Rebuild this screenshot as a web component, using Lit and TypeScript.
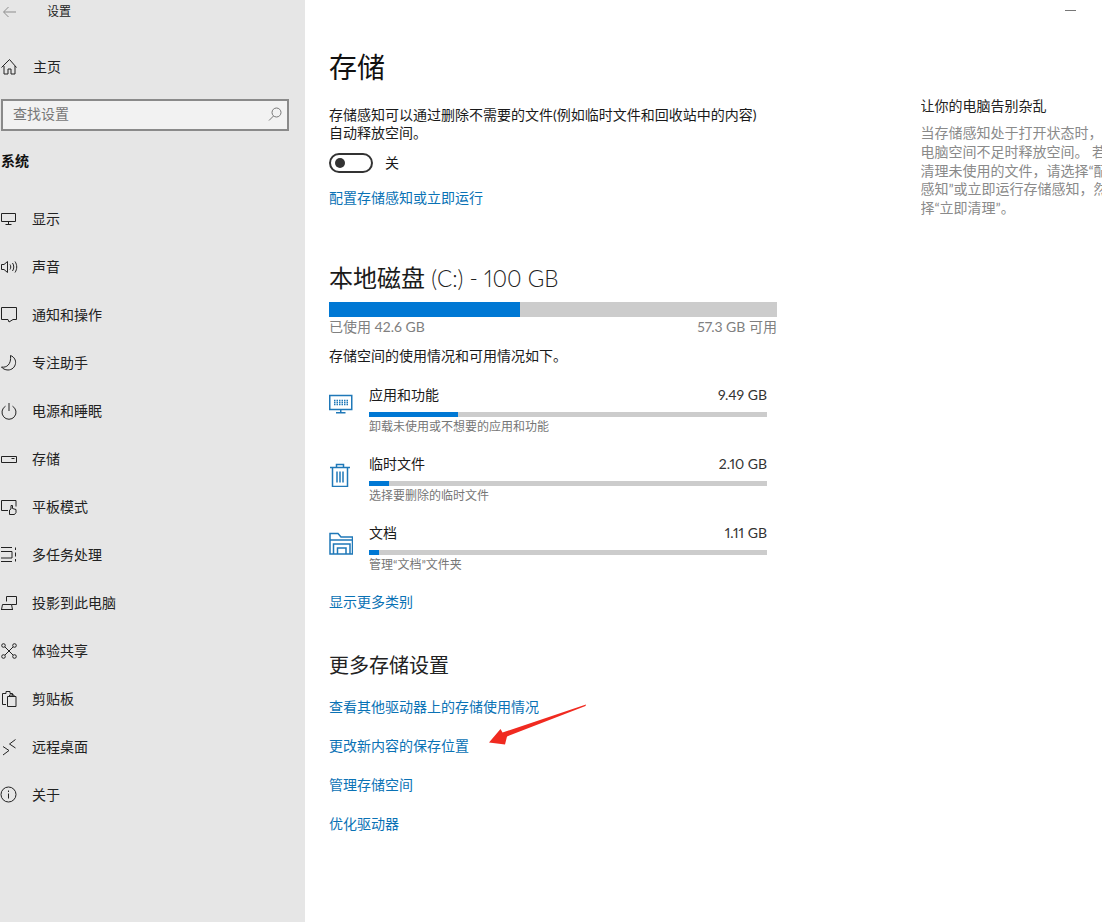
import { LitElement, html, css, svg } from "lit";
import { customElement } from "lit/decorators.js";

const S = (c: unknown) => html`<svg class="ic" viewBox="0 0 18 18" width="18" height="18" fill="none" stroke="currentColor" stroke-width="1">${c}</svg>`;

const navItems: [string, unknown][] = [
  ["显示", svg`<path d="M1.500 3.500h14v8h-14zM8.500 11.500v2.500M5.500 14.500h6"/>`],
  ["声音", svg`<path d="M1.500 6.500h2.500l3.500-3v11l-3.500-3H1.500zM10 6.500c1 1.500 1 3.500 0 5M12.500 5c1.700 2.500 1.700 5.500 0 8M15 3.500c2.300 3.500 2.300 7.500 0 11"/>`],
  ["通知和操作", svg`<path d="M1.500 1.500h15v12h-3.500l-4 2.500-1-2.500H1.500z"/>`],
  ["专注助手", svg`<path d="M10.500 1.500c4 1.500 5.500 5 5 8-.5 3.500-3.500 6.500-7.500 6.500-3 0-5.500-1.500-6.500-3 5 1 10-2.500 9-11.500z"/>`],
  ["电源和睡眠", svg`<path d="M9 1v8M5.500 4.200a7 7 0 1 0 7 0"/>`],
  ["存储", svg`<path d="M1.500 6.500h15v6h-15zM11.500 8.500h3"/>`],
  ["平板模式", svg`<path d="M8 12.500H1.500v-10h14.500v6M9.500 16.500v-4.500l1.500-1V7.500h1.500v3l3.500 1v3l-1.500 2z"/>`],
  ["多任务处理", svg`<path d="M1 1.500h11M1 15.500h11M1 5.500h11v6.500H1M15.500 1.500v2.500M15.500 6.500v4M15.500 13v2.500" />`],
  ["投影到此电脑", svg`<path d="M6.500 7.500v-5h10v8h-5M1.500 15.500h11l-1-5h-9zM1 15.500h12"/>`],
  ["体验共享", svg`<circle cx="3.500" cy="3.500" r="1.800"/><circle cx="14.500" cy="3.500" r="1.800"/><circle cx="3.500" cy="14.500" r="1.800"/><circle cx="14.500" cy="14.500" r="1.800"/><path d="M5 5l8 8M13 5l-8 8"/>`],
  ["剪贴板", svg`<path d="M6 14.500H2.500V3.500h3.500V1.500h4v2h2.500v2M7.500 6.500h8.500v10H7.500zM9.500 6.500V5h4.500v1.500"/>`],
  ["远程桌面", svg`<path d="M3 8.500l6 4-6 4.500M15.500 1.500l-6 4.500 6 4"/>`],
  ["关于", svg`<circle cx="8.500" cy="8.500" r="7.500"/><path d="M8.500 7.500v5M8.500 4.500v1.500"/>`],
];

const categories = [
  {
    name: "应用和功能", size: "9.49 GB", pct: 22.4, sub: "卸载未使用或不想要的应用和功能",
    icon: svg`<path d="M.75 1.500h22v14h-22zM11.750 15.500v3M7 18.750h9.500"/><path stroke-dasharray="1.500 1" d="M5 6.500h14M5 8.500h14M5 10.500h14"/>`,
  },
  {
    name: "临时文件", size: "2.10 GB", pct: 5, sub: "选择要删除的临时文件",
    icon: svg`<path d="M1 4.500h20M7.500 4.500V1.500h7v3M3.500 4.500v19h15v-19M8 8.500v11M11 8.500v11M14 8.500v11"/>`,
  },
  {
    name: "文档", size: "1.11 GB", pct: 2.5, sub: "管理“文档”文件夹",
    icon: svg`<path d="M1 22V1.500h8l3 3.500h11.500v17H1zM1 8h22.500M4.500 22v-10h16.500v10M8.500 22v-6h8.500v6"/>`,
  },
];

@customElement("app-root")
export class AppRoot extends LitElement {
  static styles = css`
    :host {
      display: flex;
      width: 1102px;
      height: 922px;
      overflow: hidden;
      position: relative;
      background: #fff;
      color: #1a1a1a;
      font: 14px/20px Lato, "Noto Sans CJK SC", sans-serif;
      font-variant-numeric: proportional-nums;
    }
    .ic { display: block; flex: none; }
    .side {
      width: 305px;
      flex: none;
      background: #e6e6e6;
      display: flex;
      flex-direction: column;
    }
    .tbar {
      height: 24px;
      display: flex;
      align-items: center;
      font-size: 12px;
      color: #222;
    }
    .back { margin-left: 2px; width: 14px; color: #8d8d8d; }
    .tbar span { margin-left: 31px; }
    .item {
      height: 48px;
      display: flex;
      align-items: center;
      gap: 14px;
      color: #222;
      flex: none;
    }
    .home { margin-top: 19px; gap: 15px; }
    .search {
      margin: 8px 0 0 1px;
      width: 288px;
      height: 32px;
      box-sizing: border-box;
      border: 2px solid #8a8a8a;
      background: #f2f2f2;
      display: flex;
      align-items: center;
      justify-content: space-between;
      padding: 0 5px 2px 10px;
      color: #777;
    }
    .search svg { color: #777; }
    .group {
      margin: 20px 0 24px 1px;
      font-weight: 700;
      color: #111;
    }
    .main {
      flex: 1;
      min-width: 0;
      display: grid;
      grid-template-columns: 591.500px 1fr;
      padding-left: 24px;
    }
    .left { display: flex; flex-direction: column; padding-top: 47px; }
    h1 { margin: 0; font-size: 28px; line-height: 40px; font-weight: 400; color: #111; }
    p { margin: 0; }
    .desc { margin-top: 19px; line-height: 18px; width: 440px; color: #1a1a1a; }
    .toggle-row { margin-top: 11px; display: flex; align-items: center; gap: 12px; height: 20px; }
    .toggle {
      width: 44px;
      height: 20px;
      box-sizing: border-box;
      border: 2px solid #333;
      border-radius: 10px;
      padding: 3px 4px;
    }
    .knob { display: block; width: 10px; height: 10px; border-radius: 50%; background: #333; }
    .link { color: #0a72b5; display: block; }
    .cfg { margin-top: 15px; }
    h2 { margin: 54px 0 0; height: 32px; font-size: 24px; line-height: 32px; font-weight: 400; color: #1a1a1a; }
    h2 span { font-weight: 300; color: #222; font-size: 22.500px; }
    .bar { background: #ccc; width: 448px; height: 15px; margin-top: 8px; }
    .fill { display: block; height: 100%; background: #0078d4; }
    .legend { width: 448px; display: flex; justify-content: space-between; color: #808080; }
    .info { margin-top: 9px; }
    .cats { margin-top: 19px; display: flex; flex-direction: column; gap: 19px; }
    .cat { display: flex; gap: 16px; width: 438px; }
    .cat svg { flex: none; margin-top: 9px; color: #1f78b8; }
    .cat-body { flex: 1; min-width: 0; }
    .cat-head { display: flex; justify-content: space-between; height: 20px; }
    .cat-size { color: #333; }
    .cat-bar { height: 5px; margin-top: 7px; background: #ccc; }
    .cat-sub { font-size: 12px; line-height: 17px; padding-top: 1px; color: #767676; }
    .more { margin-top: 19px; }
    h3 { margin: 39px 0 0; font-size: 20px; line-height: 29px; font-weight: 400; color: #222; }
    .links { margin-top: 17px; display: flex; flex-direction: column; gap: 19px; }
    .right { padding-top: 96px; white-space: nowrap; overflow: hidden; }
    .right-title { color: #222; }
    .right-body { margin-top: 8px; line-height: 18.750px; color: #8a8a8a; }
    .min {
      position: absolute;
      left: 1065px;
      top: 10px;
      width: 11px;
      height: 1px;
      background: #777;
    }
    .annot { position: absolute; left: 480px; top: 696px; }
  `;

  render() {
    return html`
      <aside class="side">
        <div class="tbar">
          <svg class="back" viewBox="0 0 14 12" width="14" height="12" fill="none" stroke="currentColor"><path d="M14 6H2M6.500 1L1.500 6l5 5"/></svg>
          <span>设置</span>
        </div>
        <div class="item home">
          ${S(svg`<path d="M1.500 9.500L9.500 1.500l7 8M4 8v8h4v-5h3v5h4V8"/>`)}<span>主页</span>
        </div>
        <div class="search">
          <span>查找设置</span>
          <svg viewBox="0 0 14 14" width="14" height="14" fill="none" stroke="currentColor"><circle cx="8.500" cy="5.500" r="4.500"/><path d="M5.500 9L1 13.500"/></svg>
        </div>
        <div class="group">系统</div>
        ${navItems.map(([t, i]) => html`<div class="item">${S(i)}<span>${t}</span></div>`)}
      </aside>
      <main class="main">
        <section class="left">
          <h1>存储</h1>
          <p class="desc">存储感知可以通过删除不需要的文件(例如临时文件和回收站中的内容)自动释放空间。</p>
          <div class="toggle-row"><span class="toggle"><i class="knob"></i></span><span>关</span></div>
          <a class="link cfg">配置存储感知或立即运行</a>
          <h2>本地磁盘 <span>(C:) - 100 GB</span></h2>
          <div class="bar"><span class="fill" style="width:42.600%"></span></div>
          <div class="legend"><span>已使用 42.6 GB</span><span>57.3 GB 可用</span></div>
          <p class="info">存储空间的使用情况和可用情况如下。</p>
          <div class="cats">
            ${categories.map(
              (c) => html`
                <div class="cat">
                  <svg viewBox="0 0 24 24" width="24" height="24" fill="none" stroke="currentColor" stroke-width="1.500">${c.icon}</svg>
                  <div class="cat-body">
                    <div class="cat-head"><span>${c.name}</span><span class="cat-size">${c.size}</span></div>
                    <div class="cat-bar"><span class="fill" style="width:${c.pct}%"></span></div>
                    <div class="cat-sub">${c.sub}</div>
                  </div>
                </div>
              `
            )}
          </div>
          <a class="link more">显示更多类别</a>
          <h3>更多存储设置</h3>
          <div class="links">
            <a class="link">查看其他驱动器上的存储使用情况</a>
            <a class="link">更改新内容的保存位置</a>
            <a class="link">管理存储空间</a>
            <a class="link">优化驱动器</a>
          </div>
        </section>
        <aside class="right">
          <div class="right-title">让你的电脑告别杂乱</div>
          <div class="right-body">
            当存储感知处于打开状态时，<br />
            电脑空间不足时释放空间。 若<br />
            清理未使用的文件，请选择“配<br />
            感知”或立即运行存储感知，然<br />
            择“立即清理”。
          </div>
        </aside>
      </main>
      <div class="min"></div>
      <svg class="annot" width="110" height="55" viewBox="0 0 110 55">
        <path d="M106 8.500 L105.500 10 L27 40.500 L25 48.500 L9 46.500 L20.500 33 L22.500 36.500 Z" fill="#f02a20"/>
      </svg>
    `;
  }
}
